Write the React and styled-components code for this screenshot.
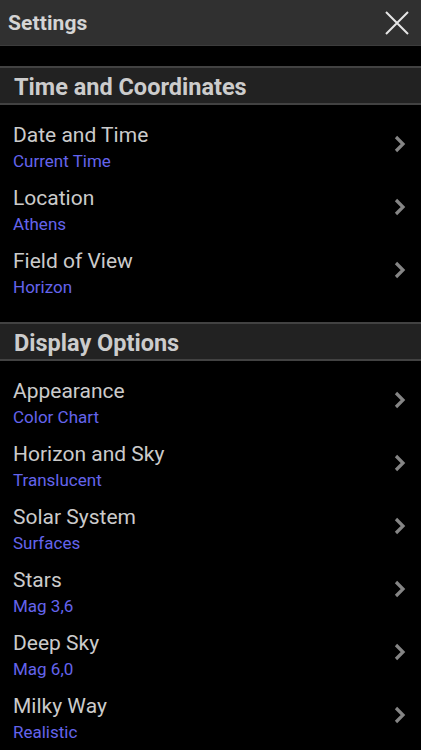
import React from 'react';
import styled, { createGlobalStyle } from 'styled-components';

const Global = createGlobalStyle`
  html, body {
    margin: 0;
    padding: 0;
    background: #000;
  }
  body {
    font-family: Roboto, "Noto Sans", sans-serif;
  }
`;

const Page = styled.div`
  width: 421px;
  height: 750px;
  background: #000;
  overflow: hidden;
`;

const Toolbar = styled.header`
  height: 46px;
  background: #303030;
  border-bottom: 1px solid #3c3c3c;
  display: flex;
  align-items: center;
  justify-content: space-between;
  padding: 1px 12px 0 8px;
  box-sizing: border-box;

  h1 {
    margin: 0;
    font-size: 21px;
    font-weight: 700;
    color: #d4d4d4;
    letter-spacing: 0.1px;
  }
`;

const Close = styled.button`
  background: none;
  border: none;
  padding: 0;
  width: 24px;
  height: 24px;
  display: flex;
`;

const Section = styled.section`
  margin-top: ${({ gap }) => gap}px;
`;

const SectionHead = styled.h2`
  margin: 0;
  height: 39px;
  box-sizing: border-box;
  background: #222;
  border-top: 2px solid #424242;
  border-bottom: 2px solid #424242;
  display: flex;
  align-items: center;
  padding: 3px 14px 0;
  font-size: 23.5px;
  font-weight: 700;
  color: #cccccc;
`;

const List = styled.ul`
  list-style: none;
  margin: 0;
  padding: 0;
`;

const Row = styled.li`
  height: 63px;
  display: flex;
  align-items: flex-start;
  justify-content: space-between;
  padding: 16px 14px 0 13px;
  box-sizing: border-box;
`;

const Labels = styled.div`
  display: flex;
  flex-direction: column;

  span {
    font-size: 21px;
    color: #cbcbcb;
    line-height: 28px;
  }
  small {
    font-size: 17px;
    color: #6464ec;
    line-height: 24px;
  }
`;

const Arrow = styled.svg`
  margin-top: 14px;
`;

const Chevron = () => (
  <Arrow width="14" height="18" viewBox="0 0 14 18">
    <path d="M3 2 L10 9 L3 16" fill="none" stroke="#858585" strokeWidth="3.2" />
  </Arrow>
);

const sections = [
  {
    title: 'Time and Coordinates',
    gap: 20,
    items: [
      ['Date and Time', 'Current Time'],
      ['Location', 'Athens'],
      ['Field of View', 'Horizon'],
    ],
  },
  {
    title: 'Display Options',
    gap: 28,
    items: [
      ['Appearance', 'Color Chart'],
      ['Horizon and Sky', 'Translucent'],
      ['Solar System', 'Surfaces'],
      ['Stars', 'Mag 3,6'],
      ['Deep Sky', 'Mag 6,0'],
      ['Milky Way', 'Realistic'],
    ],
  },
];

const App = () => (
  <Page>
    <Global />
    <Toolbar>
      <h1>Settings</h1>
      <Close aria-label="close">
        <svg width="24" height="24" viewBox="0 0 24 24">
          <path d="M1 1 L23 23 M23 1 L1 23" stroke="#e6e6e6" strokeWidth="2" />
        </svg>
      </Close>
    </Toolbar>
    {sections.map((s) => (
      <Section key={s.title} gap={s.gap}>
        <SectionHead>{s.title}</SectionHead>
        <List>
          {s.items.map(([t, v]) => (
            <Row key={t}>
              <Labels>
                <span>{t}</span>
                <small>{v}</small>
              </Labels>
              <Chevron />
            </Row>
          ))}
        </List>
      </Section>
    ))}
  </Page>
);

export default App;
